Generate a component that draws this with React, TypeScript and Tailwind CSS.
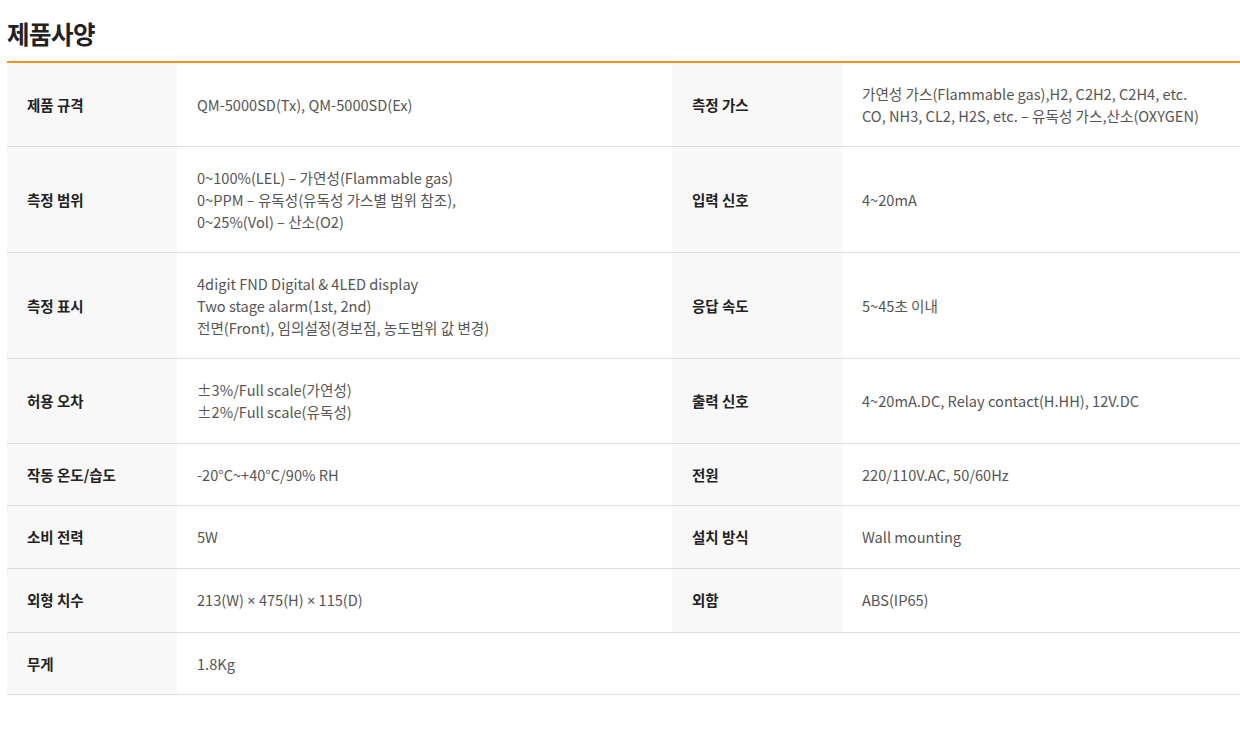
import React from 'react';

type Spec = { label: string; value: React.ReactNode[] };

const Times = () => <span style={{ fontFamily: '"Noto Sans", sans-serif' }}>×</span>;

const rows: [Spec, Spec | null][] = [
  [
    { label: '제품 규격', value: ['QM-5000SD(Tx), QM-5000SD(Ex)'] },
    {
      label: '측정 가스',
      value: [
        '가연성 가스(Flammable gas),H2, C2H2, C2H4, etc.',
        'CO, NH3, CL2, H2S, etc. – 유독성 가스,산소(OXYGEN)',
      ],
    },
  ],
  [
    {
      label: '측정 범위',
      value: [
        '0~100%(LEL) – 가연성(Flammable gas)',
        '0~PPM – 유독성(유독성 가스별 범위 참조),',
        '0~25%(Vol) – 산소(O2)',
      ],
    },
    { label: '입력 신호', value: ['4~20mA'] },
  ],
  [
    {
      label: '측정 표시',
      value: [
        '4digit FND Digital & 4LED display',
        'Two stage alarm(1st, 2nd)',
        '전면(Front), 임의설정(경보점, 농도범위 값 변경)',
      ],
    },
    { label: '응답 속도', value: ['5~45초 이내'] },
  ],
  [
    { label: '허용 오차', value: ['±3%/Full scale(가연성)', '±2%/Full scale(유독성)'] },
    { label: '출력 신호', value: ['4~20mA.DC, Relay contact(H.HH), 12V.DC'] },
  ],
  [
    { label: '작동 온도/습도', value: ['-20°C~+40°C/90% RH'] },
    { label: '전원', value: ['220/110V.AC, 50/60Hz'] },
  ],
  [
    { label: '소비 전력', value: ['5W'] },
    { label: '설치 방식', value: ['Wall mounting'] },
  ],
  [
    {
      label: '외형 치수',
      value: [
        <>
          213(W) <Times /> 475(H) <Times /> 115(D)
        </>,
      ],
    },
    { label: '외함', value: ['ABS(IP65)'] },
  ],
  [{ label: '무게', value: ['1.8Kg'] }, null],
];

function Cells({ spec }: { spec: Spec | null }) {
  if (!spec) {
    return (
      <>
        <th className="bg-white" />
        <td />
      </>
    );
  }
  return (
    <>
      <th className="bg-[#f8f8f8] px-5 py-5 text-left align-middle text-[14.5px] font-bold text-[#222]">
        {spec.label}
      </th>
      <td className="px-5 py-5 align-middle text-[14.6px] text-[#555]">
        {spec.value.map((line, i) => (
          <div key={i}>{line}</div>
        ))}
      </td>
    </>
  );
}

export default function App() {
  return (
    <div
      className="min-h-screen bg-white"
      style={{ fontFamily: '"Noto Sans CJK KR", "Noto Sans", sans-serif' }}
    >
      <div className="ml-[7px] w-[1233px]">
        <h2 className="pt-[18px] pb-[11px] text-[24.5px] font-bold leading-[32px] tracking-[-0.5px] text-[#222]">
          제품사양
        </h2>
        <table className="w-full table-fixed border-collapse border-t-2 border-[#f7931e] leading-[21.65px]">
          <colgroup>
            <col className="w-[170px]" />
            <col className="w-[495px]" />
            <col className="w-[170px]" />
            <col />
          </colgroup>
          <tbody>
            {rows.map(([left, right], i) => (
              <tr key={i} className="border-b border-[#dddddd]">
                <Cells spec={left} />
                <Cells spec={right} />
              </tr>
            ))}
          </tbody>
        </table>
      </div>
    </div>
  );
}
